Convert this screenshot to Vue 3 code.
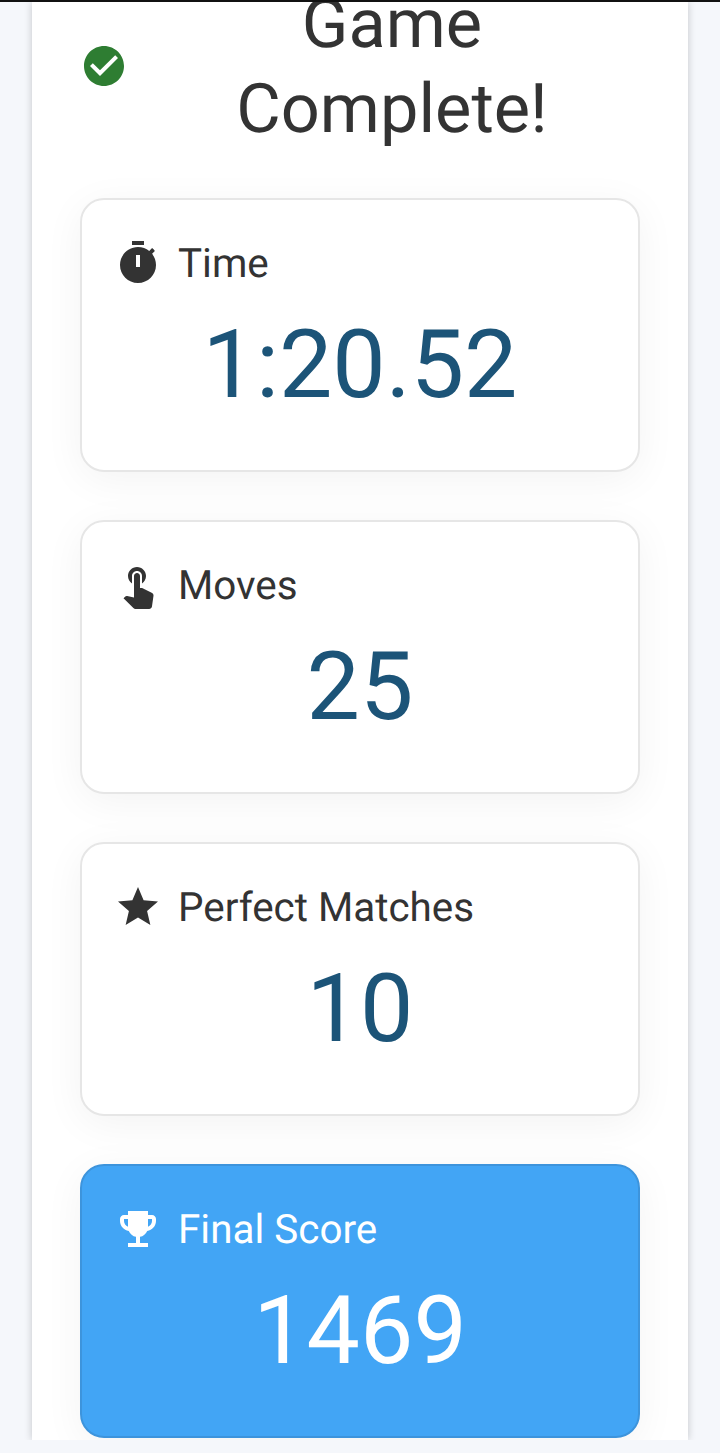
<script setup>
const stats = [
  { label: 'Time', value: '1:20.52', icon: 'M15 1H9v2h6V1zm4.03 6.39l1.42-1.42c-.43-.51-.9-.99-1.41-1.41l-1.42 1.42C16.07 4.74 14.12 4 12 4c-4.97 0-9 4.03-9 9s4.02 9 9 9 9-4.03 9-9c0-2.12-.74-4.07-1.97-5.61zM13 14h-2V8h2v6z' },
  { label: 'Moves', value: '25', icon: 'M9 11.24V7.5C9 6.12 10.12 5 11.5 5S14 6.12 14 7.5v3.74c1.21-.81 2-2.18 2-3.74C16 5.01 13.99 3 11.5 3S7 5.01 7 7.5c0 1.56.79 2.93 2 3.74zm9.84 4.63l-4.54-2.26c-.17-.07-.35-.11-.54-.11H13v-6c0-.83-.67-1.5-1.5-1.5S10 6.67 10 7.5v10.74l-3.43-.72c-.08-.01-.15-.03-.24-.03-.31 0-.59.13-.79.33l-.79.8 4.94 4.94c.27.27.65.44 1.06.44h6.79c.75 0 1.33-.55 1.44-1.28l.75-5.27c.01-.07.02-.14.02-.2 0-.62-.38-1.16-.91-1.38z' },
  { label: 'Perfect Matches', value: '10', icon: 'M12 17.27L18.18 21l-1.64-7.03L22 9.24l-7.19-.61L12 2 9.19 8.63 2 9.24l5.46 4.73L5.82 21z' },
  { label: 'Final Score', value: '1469', accent: true, icon: 'M19 5h-2V3H7v2H5c-1.1 0-2 .9-2 2v1c0 2.55 1.92 4.63 4.39 4.94.63 1.5 1.98 2.63 3.61 2.96V19H7v2h10v-2h-4v-3.1c1.63-.33 2.98-1.46 3.61-2.96C19.08 12.63 21 10.55 21 8V7c0-1.1-.9-2-2-2zM5 8V7h2v3.82C5.84 10.4 5 9.3 5 8zm14 0c0 1.3-.84 2.4-2 2.82V7h2v1z' }
]
</script>

<template>
  <div class="page">
    <main class="panel">
      <header class="head">
        <svg class="check" viewBox="0 0 24 24" width="48" height="48">
          <path fill="#2e7d32" d="M12 2C6.48 2 2 6.48 2 12s4.48 10 10 10 10-4.48 10-10S17.52 2 12 2zm-2 15l-5-5 1.41-1.41L10 14.17l7.59-7.59L19 8l-9 9z" />
        </svg>
        <h1 class="title">Game Complete!</h1>
      </header>
      <section class="stats">
        <article v-for="s in stats" :key="s.label" class="card" :class="{ accent: s.accent }">
          <div class="label">
            <svg class="icon" viewBox="0 0 24 24" width="48" height="48">
              <path fill="currentColor" fill-rule="evenodd" :d="s.icon" />
            </svg>
            <span>{{ s.label }}</span>
          </div>
          <div class="value">{{ s.value }}</div>
        </article>
      </section>
    </main>
  </div>
</template>

<style>
html, body { margin: 0; background: #f5f7fb; }
</style>

<style scoped>
.page {
  box-sizing: border-box;
  width: 720px;
  height: 1453px;
  border-top: 2px solid #111;
  background: #f5f7fb;
  font-family: Roboto, sans-serif;
  text-rendering: geometricPrecision;
  overflow: hidden;
}
.panel {
  box-sizing: border-box;
  height: 1438px;
  margin: 0 32px;
  padding: 0 48px;
  background: #fff;
  box-shadow: 0 0 8px rgba(0, 0, 0, 0.2);
  clip-path: inset(0 -16px 0 -16px);
  overflow: hidden;
}
.head {
  display: flex;
  align-items: center;
  gap: 16px;
  margin-top: -21px;
  height: 170px;
}
.check { flex: none; }
.title {
  flex: 1;
  min-width: 0;
  margin: 0;
  font-size: 68.5px;
  font-weight: 400;
  line-height: 85px;
  text-align: center;
  color: #333;
}
.stats {
  display: flex;
  flex-direction: column;
  gap: 48px;
  margin-top: 47px;
}
.card {
  box-sizing: border-box;
  height: 274px;
  padding: 39px 32px 0;
  border: 2px solid #e6e6e6;
  border-radius: 24px;
  background: #fff;
  box-shadow: 0 8px 40px rgba(0, 0, 0, 0.05);
  color: #333;
}
.label {
  display: flex;
  align-items: center;
  gap: 16px;
  height: 48px;
  font-size: 40.4px;
}
.icon { flex: none; }
.value {
  margin-top: 23px;
  font-size: 95px;
  line-height: 112px;
  text-align: center;
  color: #1c5478;
}
.accent {
  background: #42a5f5;
  border-color: #3d94dc;
  color: #fff;
}
.accent .value { color: #fff; }
</style>
